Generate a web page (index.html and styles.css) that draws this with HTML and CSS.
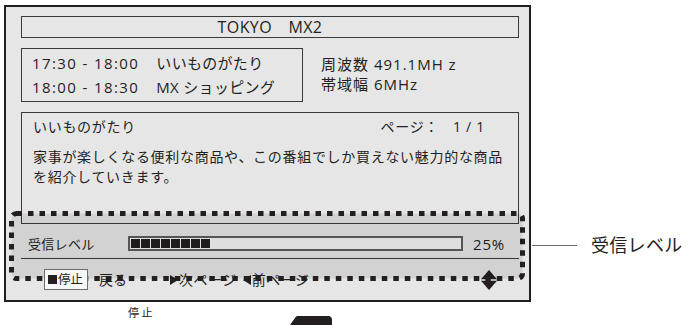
FILE: index.html
```html
<!DOCTYPE html>
<html lang="ja">
<head>
    <meta charset="UTF-8">
    <meta name="viewport" content="width=device-width, initial-scale=1.0">
    <title>受信レベル</title>
    <link rel="stylesheet" href="styles.css">
</head>
<body>

    <div class="page">
        <!-- TV screen -->
        <div class="screen">
            <div class="title">TOKYO　MX2</div>

            <div class="info">
                <div class="schedule">
                    <span class="time">17:30 - 18:00</span><span>いいものがたり</span>
                    <span class="time">18:00 - 18:30</span><span>MX ショッピング</span>
                </div>
                <div class="tuning">
                    <div>周波数 491.1MH z</div>
                    <div>帯域幅 6MHz</div>
                </div>
            </div>

            <div class="desc">
                <div class="desc-head">
                    <span>いいものがたり</span>
                    <span>ページ：<span class="page-no">1 / 1</span></span>
                </div>
                <p class="desc-text">家事が楽しくなる便利な商品や、この番組でしか買えない魅力的な商品<br>を紹介していきます。</p>
            </div>

            <div class="level">
                <span class="level-label">受信レベル</span>
                <div class="level-bar">
                    <span class="seg"></span><span class="seg"></span><span class="seg"></span><span class="seg"></span>
                    <span class="seg"></span><span class="seg"></span><span class="seg"></span><span class="seg"></span>
                </div>
                <span class="level-value">25%</span>
            </div>

            <div class="keys">
                <span class="key key-stop"><span class="stop-mark"></span>停止</span>
                <span class="key key-back">戻る</span>
                <span class="key key-next">
                    <svg class="tri" width="8" height="10" viewBox="0 0 8 10"><polygon points="0,0 8,5 0,10"/></svg>次ページ
                </span>
                <span class="key key-prev">
                    <svg class="tri" width="8" height="10" viewBox="0 0 8 10"><polygon points="8,0 0,5 8,10"/></svg>前ページ
                </span>
                <svg class="updown" width="16" height="20" viewBox="0 0 16 20">
                    <polygon points="8,0 16,9.3 0,9.3"/>
                    <polygon points="0,10.7 16,10.7 8,20"/>
                </svg>
            </div>

            <!-- dotted focus frame over the level area -->
            <svg class="focus" width="516" height="70" viewBox="0 0 516 70">
                <rect x="2.5" y="2.5" width="511" height="65" rx="5"/>
            </svg>
        </div>

        <div class="callout">
            <span class="callout-line"></span>
            <span class="callout-text">受信レベル</span>
        </div>
    </div>

    <div class="below">
        <span class="below-label">停止</span>
        <svg class="remote-key" width="42" height="9" viewBox="0 0 42 9">
            <path d="M0 9 L5.5 1.2 Q6.3 0 8 0 L38 0 Q42 0 42 4 L42 9 Z"/>
        </svg>
    </div>

</body>
</html>
```

FILE: styles.css
```css
:root {
    --ink: #231f20;
    --screen-bg: #e6e6e6;
    --line: #3a3a3a;
}

html, body {
    overflow: hidden;
}

body {
    margin: 0;
    font-family: "Open Sans", "Noto Sans CJK JP", sans-serif;
    color: var(--ink);
    background: #ffffff;
}

.page {
    display: flex;
    align-items: flex-start;
    padding: 5px 0 0 4px;
}

/* screen */
.screen {
    position: relative;
    box-sizing: border-box;
    width: 527px;
    border: 2px solid var(--ink);
    background: var(--screen-bg);
    padding: 9px 10px 0 15px;
}

.title {
    box-sizing: border-box;
    height: 22px;
    border: 1px solid var(--line);
    text-align: center;
    font-size: 16px;
    line-height: 20px;
    letter-spacing: 0.4px;
}

.info {
    display: flex;
    align-items: flex-start;
    margin-top: 10px;
}

.schedule {
    box-sizing: border-box;
    width: 282px;
    height: 54px;
    border: 1px solid var(--line);
    padding: 5px 0 0 10px;
    display: grid;
    grid-template-columns: auto auto;
    justify-content: start;
    column-gap: 17px;
    font-size: 15px;
    line-height: 19px;
    letter-spacing: 0.3px;
}

.time {
    letter-spacing: 1.4px;
}

.tuning {
    margin-left: 18px;
    padding-top: 6px;
    font-size: 15px;
    line-height: 20px;
    letter-spacing: 1px;
}

.desc {
    box-sizing: border-box;
    height: 112px;
    margin-top: 10px;
    border: 1px solid var(--line);
    padding: 4px 8px 0 11px;
    font-size: 14px;
    letter-spacing: 0.7px;
}

.desc-head {
    display: flex;
    justify-content: space-between;
    padding-right: 25px;
    line-height: 20px;
}

.page-no {
    margin-left: 14px;
}

.desc-text {
    margin: 10px 0 0;
    line-height: 20px;
}

/* reception level */
.level {
    box-sizing: border-box;
    height: 35px;
    padding: 5px 0 0 7px;
    border-bottom: 1px solid var(--line);
    display: flex;
    align-items: center;
}

.level-label {
    width: 100px;
    font-size: 13px;
    line-height: 16px;
    letter-spacing: 0.3px;
}

.level-bar {
    box-sizing: border-box;
    width: 335px;
    height: 15px;
    border: 2px solid #5e5e5e;
    background: #f4f4f4;
    padding: 1px;
    display: flex;
    gap: 1px;
}

.seg {
    width: 9px;
    background: var(--ink);
}

.level-value {
    margin-left: 10px;
    font-size: 15px;
    line-height: 18px;
    letter-spacing: 0.8px;
}

/* key guide */
.keys {
    height: 41px;
    padding-left: 23px;
    display: flex;
    align-items: center;
    font-size: 14px;
    line-height: 16px;
}

.key {
    display: flex;
    align-items: center;
}

.key-stop {
    position: relative;
    z-index: 1;
    box-sizing: border-box;
    height: 21px;
    padding: 0 4px 0 3px;
    border: 1px solid #6e6e6e;
    background: #f7f7f7;
    font-size: 12.5px;
}

.stop-mark {
    width: 9px;
    height: 9px;
    margin-right: 1px;
    background: var(--ink);
}

.key-back {
    margin-left: 11px;
}

.key-next {
    margin-left: 43px;
    letter-spacing: 0.5px;
}

.key-prev {
    margin-left: 6px;
    letter-spacing: 0.5px;
}

.tri {
    margin-right: 1px;
    fill: var(--ink);
}

.updown {
    margin-left: auto;
    margin-right: 22px;
    fill: var(--ink);
}

.focus {
    position: absolute;
    left: 3px;
    top: 204px;
}

.focus rect {
    fill: rgba(0, 0, 0, 0.085);
    stroke: var(--ink);
    stroke-width: 5;
    stroke-dasharray: 5.5 6;
}

/* callout on the right */
.callout {
    display: flex;
    align-items: center;
    height: 26px;
    margin-top: 227px;
}

.callout-line {
    width: 45px;
    height: 1px;
    margin-left: 1px;
    background: #6b6b6b;
}

.callout-text {
    margin-left: 14px;
    font-size: 18px;
    line-height: 26px;
    letter-spacing: 0.3px;
}

/* under the screen */
.below {
    display: flex;
    align-items: flex-start;
    padding-left: 128px;
}

.below-label {
    width: 40px;
    margin-top: 4px;
    font-size: 11px;
    line-height: 14px;
    letter-spacing: 2.5px;
}

.remote-key {
    margin-left: 122px;
    margin-top: 14px;
    fill: var(--ink);
}
```
